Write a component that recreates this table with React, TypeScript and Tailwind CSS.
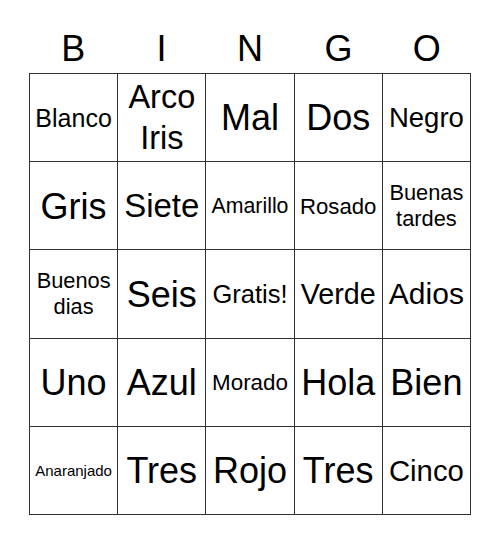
type Cell = { text: string[]; size: number; lead?: number };

const letters = ['B', 'I', 'N', 'G', 'O'];

const cells: Cell[] = [
  { text: ['Blanco'], size: 25 },
  { text: ['Arco', 'Iris'], size: 32.5, lead: 1.26 },
  { text: ['Mal'], size: 36 },
  { text: ['Dos'], size: 36 },
  { text: ['Negro'], size: 27.5 },

  { text: ['Gris'], size: 36 },
  { text: ['Siete'], size: 33 },
  { text: ['Amarillo'], size: 21.3 },
  { text: ['Rosado'], size: 22.2 },
  { text: ['Buenas', 'tardes'], size: 21.8, lead: 1.2 },

  { text: ['Buenos', 'dias'], size: 21.8, lead: 1.2 },
  { text: ['Seis'], size: 36 },
  { text: ['Gratis!'], size: 25.5 },
  { text: ['Verde'], size: 28.7 },
  { text: ['Adios'], size: 30 },

  { text: ['Uno'], size: 36 },
  { text: ['Azul'], size: 36 },
  { text: ['Morado'], size: 22.4 },
  { text: ['Hola'], size: 36 },
  { text: ['Bien'], size: 36 },

  { text: ['Anaranjado'], size: 15 },
  { text: ['Tres'], size: 36 },
  { text: ['Rojo'], size: 36 },
  { text: ['Tres'], size: 36 },
  { text: ['Cinco'], size: 29.3 },
];

export default function App() {
  return (
    <div className="w-[500px] h-[544px] bg-white text-black font-['Liberation_Sans',Arial,sans-serif]">
      <div className="mx-auto w-[442px]">
        {/* header letters */}
        <div className="grid grid-cols-5 h-[73px]">
          {letters.map((l) => (
            <div key={l} className="pt-[31px] text-center text-[36px] leading-[36px]">
              {l}
            </div>
          ))}
        </div>

        <div className="grid grid-cols-5 border-l border-t border-[#333]">
          {cells.map((c, i) => (
            <div
              key={i}
              className="h-[88.2px] flex flex-col items-center justify-center text-center border-r border-b border-[#333] pt-[1px]"
              style={{ fontSize: c.size, lineHeight: c.lead ?? 1.15 }}
            >
              {c.text.map((t) => (
                <span key={t}>{t}</span>
              ))}
            </div>
          ))}
        </div>
      </div>
    </div>
  );
}
